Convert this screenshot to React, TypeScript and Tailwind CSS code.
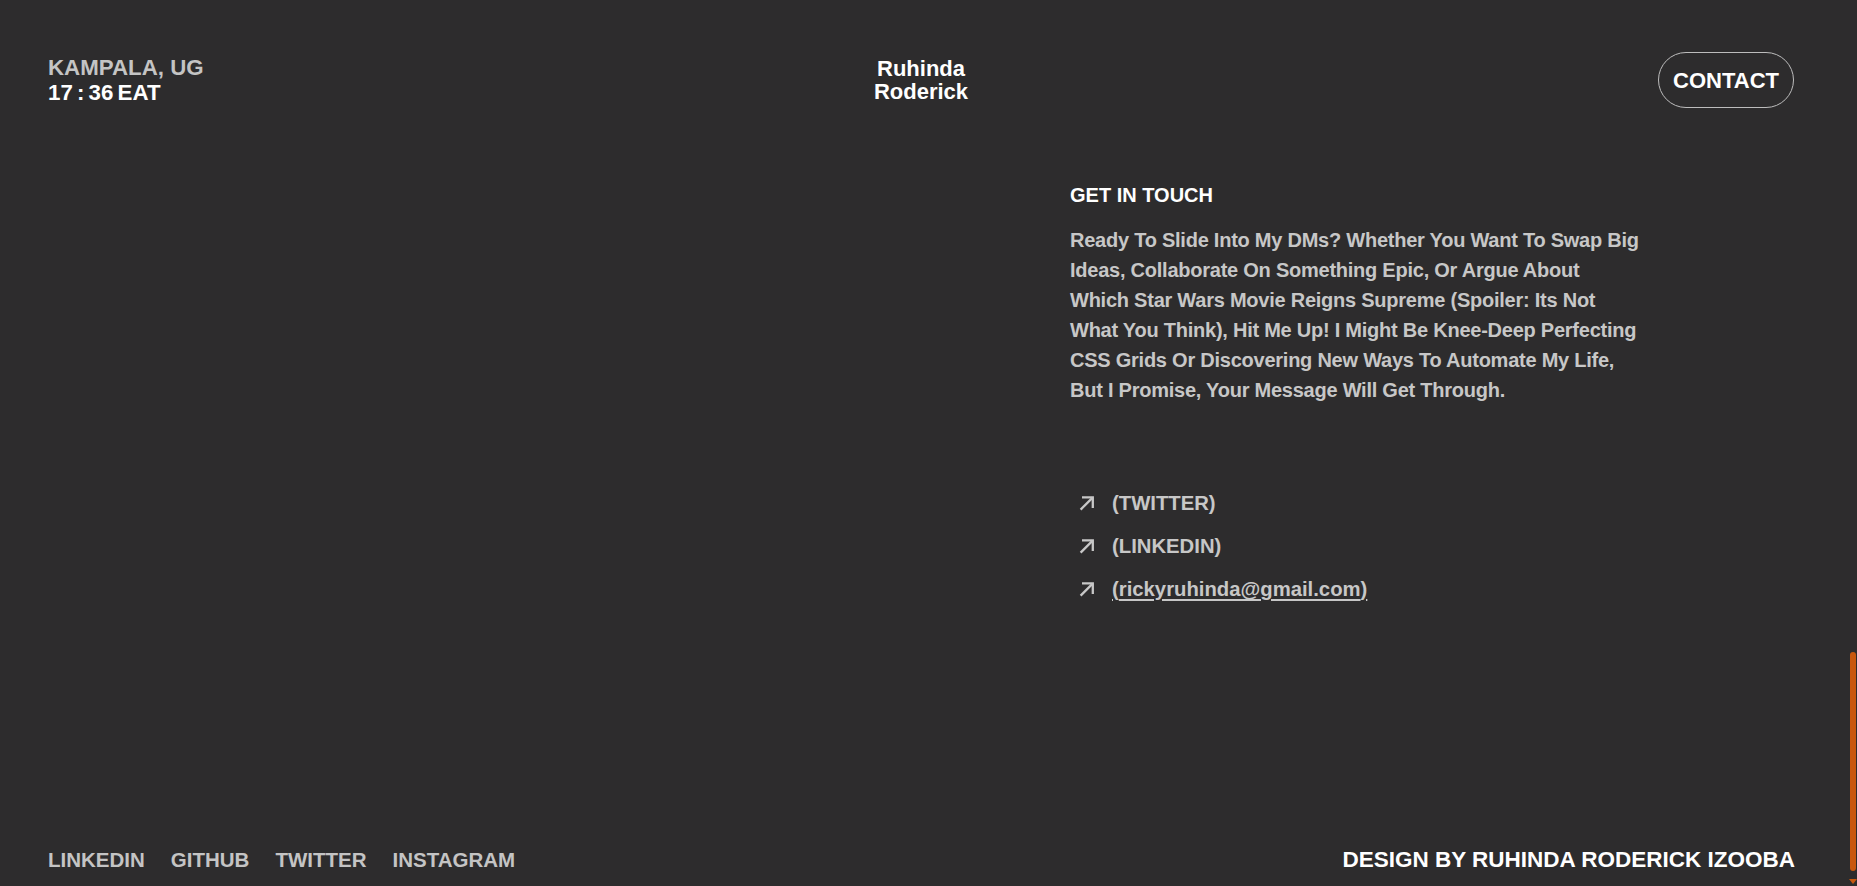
const socials = ['LINKEDIN', 'GITHUB', 'TWITTER', 'INSTAGRAM']

const contacts = [
  { label: '(TWITTER)', href: '#' },
  { label: '(LINKEDIN)', href: '#' },
  { label: 'rickyruhinda@gmail.com', href: 'mailto:rickyruhinda@gmail.com', email: true },
]

const message = [
  'Ready To Slide Into My DMs? Whether You Want To Swap Big',
  'Ideas, Collaborate On Something Epic, Or Argue About',
  'Which Star Wars Movie Reigns Supreme (Spoiler: Its Not',
  'What You Think), Hit Me Up! I Might Be Knee-Deep Perfecting',
  'CSS Grids Or Discovering New Ways To Automate My Life,',
  'But I Promise, Your Message Will Get Through.',
]

function Arrow() {
  return (
    <svg width="16" height="16" viewBox="0 0 16 16" fill="none" className="ml-[9px] mr-[17px] shrink-0">
      <path d="M1.6 14.6 L13.6 2.6" stroke="#c7c7c7" strokeWidth="2.3" />
      <path d="M3 2.4 H13.8 V13" stroke="#c7c7c7" strokeWidth="2.3" />
    </svg>
  )
}

function Header() {
  return (
    <header className="grid grid-cols-3 items-center pt-[52px] pl-[48px] pr-[55px]">
      <div className="text-[22.3px] leading-[25px] font-bold">
        <p className="text-[#c4c4c4]">KAMPALA, UG</p>
        <p className="text-white [word-spacing:-2px]">17 : 36 EAT</p>
      </div>

      <div className="text-center text-[22px] leading-[23px] font-bold text-white">
        <p>Ruhinda</p>
        <p>Roderick</p>
      </div>

      <div className="flex justify-end">
        <a
          href="#contact"
          className="flex h-[56px] items-center rounded-full border border-[#bdbdbd] px-[14px] text-[22px] font-bold text-white"
        >
          CONTACT
        </a>
      </div>
    </header>
  )
}

function GetInTouch() {
  return (
    <section id="contact" className="grid grid-cols-[1022px_1fr] pt-[72px] pl-[48px]">
      <div />
      <div className="text-[20px] leading-[30px] font-bold">
        <h2 className="text-white">GET IN TOUCH</h2>

        <p className="mt-[15px] tracking-[-0.012em] text-[#c7c7c7]">
          {message.map((line) => (
            <span key={line} className="block whitespace-nowrap">
              {line}
            </span>
          ))}
        </p>

        {/* Links */}
        <ul className="mt-[83px] flex flex-col gap-[13px] text-[20.3px] text-[#c7c7c7]">
          {contacts.map((c) => (
            <li key={c.label} className="flex items-center">
              <Arrow />
              {c.email ? (
                <a href={c.href} className="underline underline-offset-[3px]">
                  ({c.label})
                </a>
              ) : (
                <a href={c.href}>{c.label}</a>
              )}
            </li>
          ))}
        </ul>
      </div>
    </section>
  )
}

function Footer() {
  return (
    <footer className="flex items-center justify-between pb-[11px] pl-[48px] pr-[54px]">
      <nav className="flex gap-[26px] text-[20.5px] leading-[30px] font-bold text-[#c4c4c4]">
        {socials.map((s) => (
          <a key={s} href="#">
            {s}
          </a>
        ))}
      </nav>
      <p className="text-[22.5px] leading-[30px] font-bold text-white">
        DESIGN BY RUHINDA RODERICK IZOOBA
      </p>
    </footer>
  )
}

export default function App() {
  return (
    <div
      className="flex h-screen bg-[#2d2c2d]"
      style={{ fontFamily: '"Liberation Sans", Arial, sans-serif' }}
    >
      <div className="flex min-w-0 flex-1 flex-col">
        <Header />
        <main className="flex-1">
          <GetInTouch />
        </main>
        <Footer />
      </div>

      {/* Scrollbar */}
      <div className="flex w-[8px] flex-col items-center justify-end pb-[2px]">
        <div className="h-[219px] w-[6px] rounded-full bg-[#c8580e]" />
        <div className="mt-[8px] h-0 w-0 border-x-[4px] border-t-[5px] border-x-transparent border-t-[#c8580e]" />
      </div>
    </div>
  )
}
